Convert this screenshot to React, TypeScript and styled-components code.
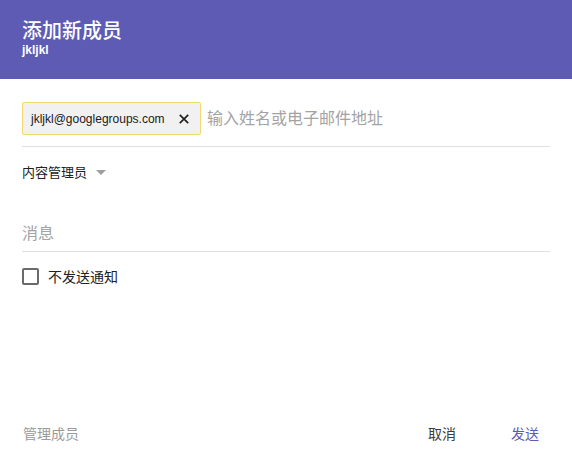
import React, { useState } from "react";
import styled, { createGlobalStyle } from "styled-components";

const GlobalStyle = createGlobalStyle`
    html, body {
        margin: 0;
        padding: 0;
        background: #ffffff;
    }
    body {
        font-family: "Liberation Sans", "Noto Sans CJK SC", sans-serif;
    }
`;

const Dialog = styled.div`
    width: 572px;
    height: 459px;
    display: flex;
    flex-direction: column;
    background: #fff;
`;

const Header = styled.div`
    height: 79px;
    box-sizing: border-box;
    background: #5d5bb4;
    color: #fff;
    padding: 19px 22px 0;
`;

const Title = styled.div`
    font-size: 20px;
    font-weight: 500;
    line-height: 24px;
`;

const Subtitle = styled.div`
    font-size: 12px;
    font-weight: 700;
    line-height: 13px;
    margin-top: 1px;
`;

const Body = styled.div`
    flex: 1;
    padding: 23px 22px 0;
    display: flex;
    flex-direction: column;
`;

const RecipientField = styled.div`
    display: flex;
    align-items: center;
    gap: 6px;
    padding-bottom: 11px;
    border-bottom: 1px solid #e0e0e0;
`;

const Chip = styled.div`
    display: flex;
    align-items: center;
    flex-shrink: 0;
    height: 33px;
    box-sizing: border-box;
    width: 179px;
    padding: 0 11px 0 8px;
    justify-content: space-between;
    background: #f1f1f1;
    border: 1px solid #f3d774;
    border-radius: 2px;
    font-size: 12px;
    color: #202020;
`;

const ChipClose = styled.button`
    border: 0;
    background: none;
    padding: 0;
    display: flex;
    cursor: pointer;
`;

const TextInput = styled.input<{ $size: number }>`
    flex: 1;
    min-width: 0;
    border: 0;
    outline: none;
    padding: 0;
    font-family: inherit;
    font-size: ${(p) => p.$size}px;
    color: #212121;
    background: transparent;
    &::placeholder {
        color: #a3a3a3;
    }
`;

const RoleSelect = styled.div`
    display: flex;
    align-items: center;
    gap: 9px;
    margin-top: 15px;
    font-size: 13px;
    color: #212121;
    cursor: pointer;
`;

const Caret = styled.span`
    width: 0;
    height: 0;
    border-left: 5px solid transparent;
    border-right: 5px solid transparent;
    border-top: 5px solid #9e9e9e;
    margin-top: 2px;
`;

const MessageField = styled.div`
    margin-top: 44px;
    padding-bottom: 8px;
    border-bottom: 1px solid #e0e0e0;
    display: flex;
`;

const CheckRow = styled.label`
    display: flex;
    align-items: center;
    gap: 9px;
    margin-top: 14px;
    font-size: 14px;
    color: #212121;
    cursor: pointer;
`;

const Box = styled.span<{ $checked: boolean }>`
    width: 17px;
    height: 17px;
    box-sizing: border-box;
    border: 2px solid #6a6a6a;
    border-radius: 2px;
    background: ${(p) => (p.$checked ? "#6a6a6a" : "transparent")};
`;

const Footer = styled.div`
    display: flex;
    align-items: center;
    height: 68px;
    padding: 16px 33px 0 23px;
    box-sizing: border-box;
`;

const FooterLink = styled.span`
    flex: 1;
    font-size: 14px;
    color: #9b9b9b;
`;

const Action = styled.button<{ $primary?: boolean }>`
    border: 0;
    background: none;
    font-family: inherit;
    font-size: 14px;
    padding: 0;
    margin-left: ${(p) => (p.$primary ? "55px" : "0")};
    color: ${(p) => (p.$primary ? "#5d5bb4" : "#3c3c3c")};
    cursor: pointer;
`;

const CloseIcon = () => (
    <svg width="10" height="10" viewBox="0 0 10 10">
        <path d="M0.8 0.8 L9.2 9.2 M9.2 0.8 L0.8 9.2" stroke="#222" strokeWidth="1.7" />
    </svg>
);

const App = () => {
    const [silent, setSilent] = useState(false);
    return (
        <Dialog>
            <GlobalStyle />
            <Header>
                <Title>添加新成员</Title>
                <Subtitle>jkljkl</Subtitle>
            </Header>
            <Body>
                <RecipientField>
                    <Chip>
                        <span>jkljkl@googlegroups.com</span>
                        <ChipClose aria-label="remove">
                            <CloseIcon />
                        </ChipClose>
                    </Chip>
                    <TextInput $size={16} placeholder="输入姓名或电子邮件地址" />
                </RecipientField>
                <RoleSelect>
                    内容管理员
                    <Caret />
                </RoleSelect>
                <MessageField>
                    <TextInput $size={16} placeholder="消息" />
                </MessageField>
                <CheckRow onClick={() => setSilent(!silent)}>
                    <Box $checked={silent} />
                    不发送通知
                </CheckRow>
            </Body>
            <Footer>
                <FooterLink>管理成员</FooterLink>
                <Action>取消</Action>
                <Action $primary>发送</Action>
            </Footer>
        </Dialog>
    );
};

export default App;
